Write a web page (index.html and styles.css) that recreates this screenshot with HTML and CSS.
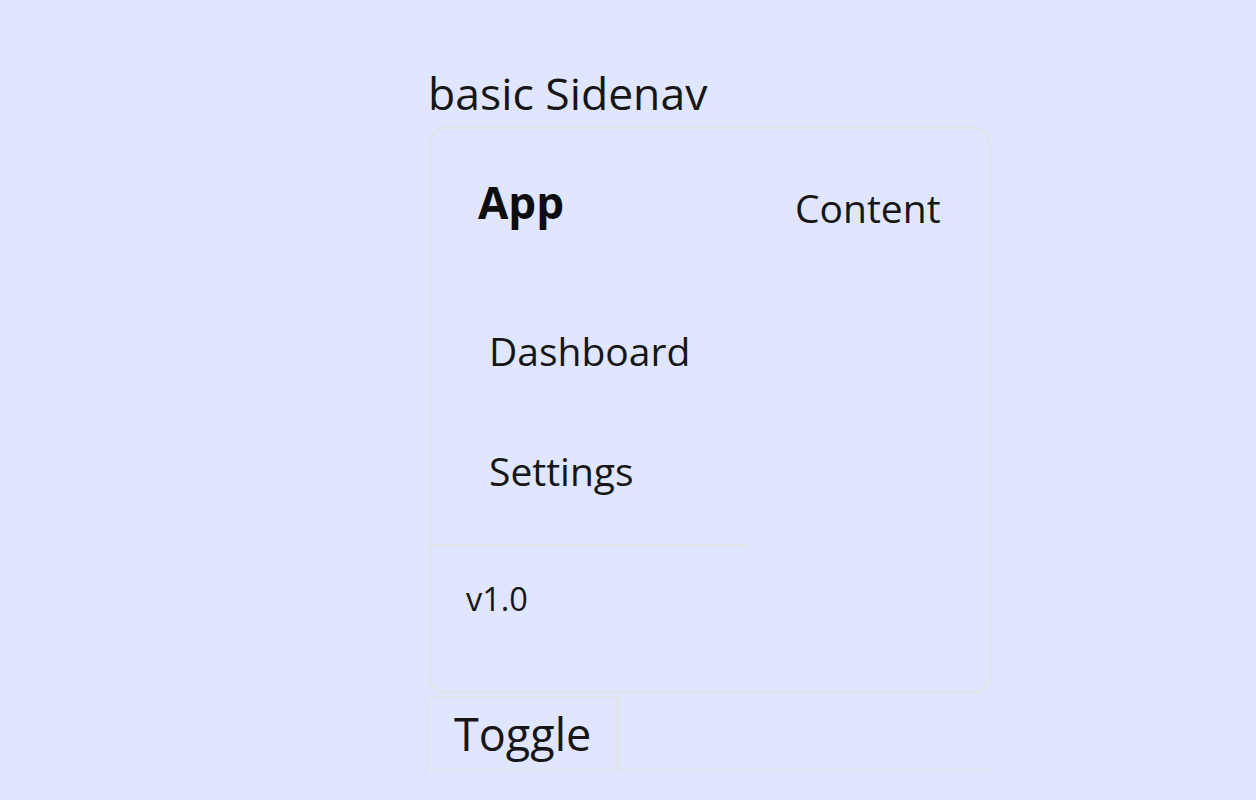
FILE: index.html
```html
<!DOCTYPE html>
<html lang="en">
<head>
<meta charset="utf-8">
<title>basic Sidenav</title>
<link rel="stylesheet" href="styles.css">
</head>
<body>
<div class="page">
  <div class="title">basic Sidenav</div>
  <div class="card">
    <aside class="sidenav">
      <div class="brand">App</div>
      <nav class="nav">
        <div class="nav-item">Dashboard</div>
        <div class="nav-item">Settings</div>
      </nav>
      <div class="footer">v1.0</div>
    </aside>
    <main class="content">Content</main>
  </div>
  <div class="toolbar">
    <button class="toggle" type="button">Toggle</button>
    <div class="spacer"></div>
  </div>
</div>
</body>
</html>
```

FILE: styles.css
```css
html, body {
  margin: 0;
  padding: 0;
  background: #e0e6ff;
}

body {
  font-family: "Open Sans", "Noto Sans", sans-serif;
  color: #161616;
}

.page {
  width: 563px;
  margin-left: 428px;
  padding-top: 66px;
}

.title {
  font-size: 44.5px;
  line-height: 1.2;
  margin-bottom: 7px;
}

.card {
  box-sizing: border-box;
  height: 568px;
  border: 3px solid #e2e4ec;
  border-radius: 18px;
  display: flex;
}

.sidenav {
  width: 317px;
  display: flex;
  flex-direction: column;
}

.brand {
  font-size: 44px;
  font-weight: 700;
  line-height: 1.2;
  padding: 47px 0 0 47px;
  color: #0d0d0d;
}

.nav {
  margin-top: 62px;
  padding-bottom: 13px;
}

.nav-item {
  font-size: 39px;
  line-height: 1.2;
  padding: 37px 0 36px 58px;
}

.footer {
  flex: 1;
  border-top: 3px solid #e2e4ec;
  font-size: 32.5px;
  line-height: 1.2;
  padding: 32px 0 0 35px;
}

.content {
  flex: 1;
  font-size: 39px;
  line-height: 1.2;
  padding: 56px 0 0 47px;
}

.toolbar {
  display: flex;
  margin-top: 2px;
}

.toggle {
  font-family: "Open Sans", "Noto Sans", sans-serif;
  font-size: 45px;
  line-height: 1.2;
  color: #161616;
  background: transparent;
  border: 2px solid #e2e4ec;
  padding: 9px 23px 8px 24px;
  margin: 0;
  width: 190px;
  text-align: left;
}

.spacer {
  flex: 1;
  border-left: 2px solid #e2e4ec;
  border-bottom: 2px solid #e2e4ec;
}
```
